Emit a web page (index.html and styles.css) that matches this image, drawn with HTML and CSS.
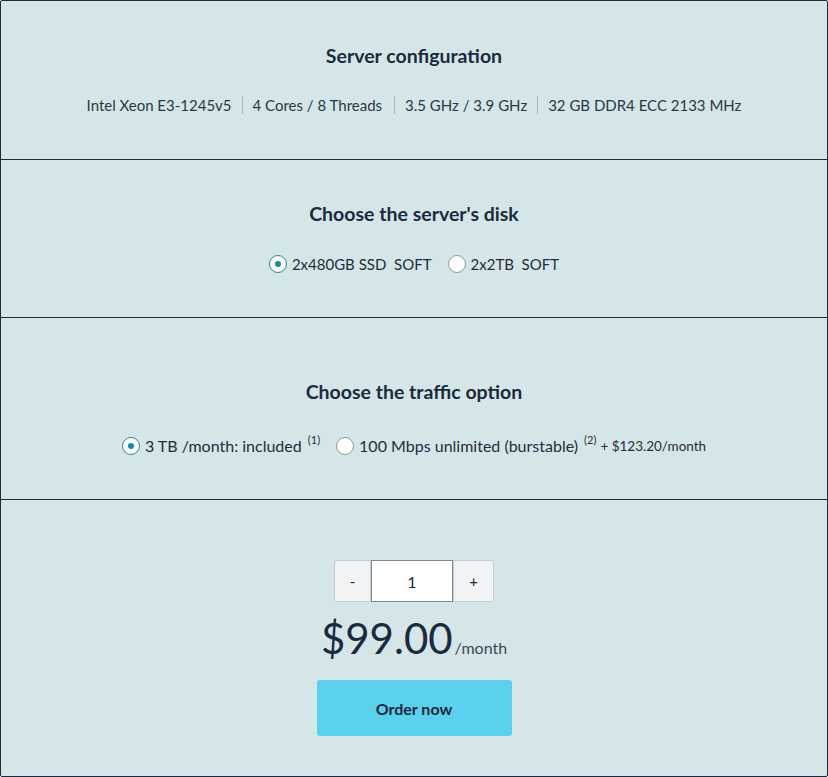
FILE: index.html
```html
<!DOCTYPE html>
<html>
<head>
<meta charset="utf-8">
<link rel="stylesheet" href="styles.css">
</head>
<body>
<div class="panel">
  <section class="sec sec-config">
    <h2 class="title">Server configuration</h2>
    <div class="specs">
      <span>Intel Xeon E3-1245v5</span><span class="sep"></span><span>4 Cores / 8 Threads</span><span class="sep sep-wide"></span><span>3.5 GHz / 3.9 GHz</span><span class="sep"></span><span>32 GB DDR4 ECC 2133 MHz</span>
    </div>
  </section>
  <section class="sec sec-disk">
    <h2 class="title">Choose the server's disk</h2>
    <div class="options">
      <label class="opt"><span class="radio checked"></span>2x480GB SSD&nbsp; SOFT</label>
      <label class="opt"><span class="radio"></span>2x2TB&nbsp; SOFT</label>
    </div>
  </section>
  <section class="sec sec-traffic">
    <h2 class="title">Choose the traffic option</h2>
    <div class="options">
      <label class="opt"><span class="radio checked"></span>3 TB /month: included <sup>(1)</sup></label>
      <label class="opt"><span class="radio"></span>100 Mbps unlimited (burstable) <sup>(2)</sup> <small class="extra">+ $123.20/month</small></label>
    </div>
  </section>
  <section class="sec sec-order">
    <div class="qty">
      <button class="qbtn minus">-</button>
      <div class="qinput">1</div>
      <button class="qbtn plus">+</button>
    </div>
    <div class="price"><span class="amount">$99.00</span><span class="per">/month</span></div>
    <button class="order">Order now</button>
  </section>
</div>
</body>
</html>
```
FILE: styles.css
```css
* { box-sizing: border-box; }
html, body { margin: 0; padding: 0; }
body {
  background: #ffffff;
  font-family: "Lato", "Open Sans", sans-serif;
  color: #1b2a3c;
}
.panel {
  width: 828px;
  height: 777px;
  border: 1px solid #1b2a3a;
  border-radius: 2px;
  background: #d5e6e8;
  display: flex;
  flex-direction: column;
}
.sec {
  border-bottom: 1px solid #1b2a3a;
  display: flex;
  flex-direction: column;
  align-items: center;
}
.sec:last-child { border-bottom: none; flex: 1; }
.title {
  margin: 0;
  font-size: 19.5px;
  font-weight: 700;
  line-height: 24px;
  color: #1b2a3c;
}
.sec-config { padding-top: 43px; height: 159px; }
.sec-config .specs { margin-top: 25px; }
.sec-disk { padding-top: 42px; height: 158px; }
.sec-traffic { padding-top: 62px; height: 182px; }
.specs {
  font-size: 15px;
  line-height: 24px;
  color: #2a3846;
  display: flex;
  align-items: center;
}
.sep {
  display: inline-block;
  width: 1px;
  height: 18px;
  background: #a8b6bc;
  margin: 0 10px;
}
.sep-wide { margin-left: 12px; }
.options {
  display: flex;
  align-items: center;
  gap: 16px;
  font-size: 15px;
  line-height: 24px;
  color: #1f2d3c;
}
.sec-disk .options { margin-top: 26px; }
.sec-traffic .options { margin-top: 30px; font-size: 16px; }
.opt { display: flex; align-items: center; white-space: pre; }
.radio {
  width: 18px;
  height: 18px;
  border-radius: 50%;
  border: 1px solid #8c9aa2;
  background: #fff;
  margin-right: 5px;
  position: relative;
  flex: none;
}
.radio.checked { border-color: #2a8aa0; }
.radio.checked::after {
  content: "";
  position: absolute;
  left: 5px;
  top: 5px;
  width: 6px;
  height: 6px;
  border-radius: 50%;
  background: #1f8aa3;
}
sup { font-size: 11px; line-height: 0; position: relative; top: -6px; vertical-align: baseline; margin-left: 2px; }
.extra { font-size: 13.5px; margin-left: 4px; }
.sec-order { padding-top: 60px; }
.qty {
  display: flex;
  height: 42px;
}
.qbtn {
  font-family: inherit;
  background: #f2f3f4;
  border: 1px solid #c6cdd1;
  color: #1b2a3c;
  font-size: 15px;
  padding: 0;
  border-radius: 3px;
}
.minus { width: 37px; border-top-right-radius: 0; border-bottom-right-radius: 0; }
.plus { width: 41px; border-top-left-radius: 0; border-bottom-left-radius: 0; }
.qinput {
  width: 82px;
  background: #fff;
  border: 1px solid #7a8a94;
  display: flex;
  align-items: center;
  justify-content: center;
  font-size: 16px;
}
.price {
  margin-top: 8px;
  display: flex;
  align-items: baseline;
  height: 56px;
}
.amount { font-size: 42px; line-height: 56px; color: #1b2a3c; }
.per { font-size: 16px; color: #3a4856; margin-left: 2px; }
.order {
  margin-top: 14px;
  width: 195px;
  height: 56px;
  border: none;
  border-radius: 3px;
  background: #5bd1ee;
  color: #1b2a3c;
  font-family: inherit;
  font-size: 16px;
  font-weight: 700;
}
```
